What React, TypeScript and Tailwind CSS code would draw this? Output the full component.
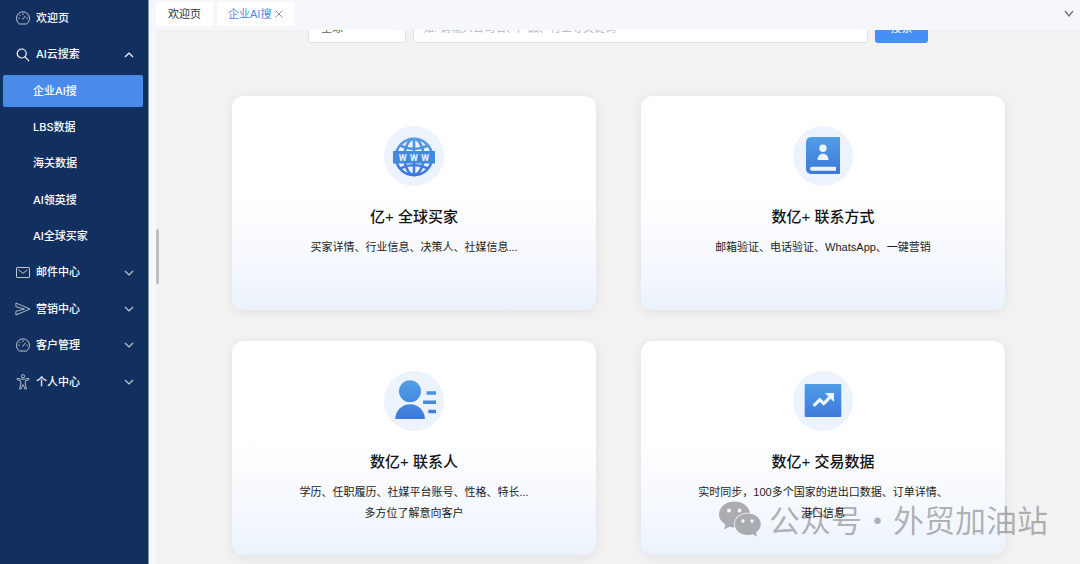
import type { ReactNode } from "react";
import clsx from "clsx";

function DashboardIcon() {
  return (
    <svg viewBox="0 0 14 14" className="h-3.5 w-3.5" fill="none" stroke="currentColor" strokeLinecap="round" strokeLinejoin="round">
      <path d="M3.2 12.8C1.5 11.6.5 9.6.5 7.3a6.5 6.5 0 0 1 13 0c0 2.300-1 4.300-2.700 5.500Z" />
      <path d="M6.600 8.300 9.300 5.100M7 2.600v.9M3.800 4.100l.5.5M2.600 7.200h.8M10.600 7.200h.8" />
    </svg>
  );
}

function SearchIcon() {
  return (
    <svg viewBox="0 0 14 14" className="h-3.5 w-3.5" fill="none" stroke="currentColor" strokeWidth="1.200" strokeLinecap="round">
      <circle cx="5.700" cy="5.500" r="4.500" />
      <path d="m9 8.800 3.700 3.900" />
    </svg>
  );
}

function MailIcon() {
  return (
    <svg viewBox="0 0 14 14" className="h-3.5 w-3.5" fill="none" stroke="currentColor" strokeLinejoin="round">
      <rect x=".5" y="1.500" width="13" height="10" rx=".6" />
      <path d="m2.500 3.800 4.500 3.500 4.500-3.500" />
    </svg>
  );
}

function SendIcon() {
  return (
    <svg viewBox="0 0 14 14" className="h-3.5 w-3.5 overflow-visible" fill="none" stroke="currentColor" strokeWidth=".9" strokeLinejoin="round">
      <path d="M-.1 1 14 7-.1 13V9.300L8.500 7-.1 4.700Z" />
    </svg>
  );
}

function PersonIcon() {
  return (
    <svg viewBox="0 0 14 14" className="h-3.5 w-3.5 overflow-visible" fill="none" stroke="currentColor" strokeWidth=".9" strokeLinejoin="round">
      <circle cx="7" cy="1.200" r="1.600" />
      <path d="M1.200 3.300 5.500 4.200h3l4.300-.9v1.300L9.300 6v3l1.100 5H9L7.300 9.800h-.6L5 14H3.600l1.100-5V6L1.200 4.600Z" />
    </svg>
  );
}

function Chevron({ up = false }: { up?: boolean }) {
  return (
    <svg viewBox="0 0 10 6" className="h-1.5 w-2.5" fill="none" stroke="currentColor" strokeWidth="1.200">
      <path d={up ? "M1 5l4-4 4 4" : "M1 1l4 4 4-4"} />
    </svg>
  );
}

type NavItem = { label: string; icon?: ReactNode; state?: "open" | "closed"; active?: boolean };

const NAV: NavItem[] = [
  { label: "欢迎页", icon: <DashboardIcon /> },
  { label: "AI云搜索", icon: <SearchIcon />, state: "open" },
  { label: "企业AI搜", active: true },
  { label: "LBS数据" },
  { label: "海关数据" },
  { label: "AI领英搜" },
  { label: "AI全球买家" },
  { label: "邮件中心", icon: <MailIcon />, state: "closed" },
  { label: "营销中心", icon: <SendIcon />, state: "closed" },
  { label: "客户管理", icon: <DashboardIcon />, state: "closed" },
  { label: "个人中心", icon: <PersonIcon />, state: "closed" },
];

function Sidebar() {
  return (
    <aside className="w-[149px] shrink-0 border-r border-[#8896b3] bg-[#113060] font-['Inter','Noto_Sans_CJK_SC',sans-serif]">
      <nav className="grid h-[400px] auto-rows-fr px-[3px] pr-[5px]">
        {NAV.map((item) => (
          <button
            key={item.label}
            className={clsx(
              "my-0.5 flex items-center rounded-xs text-left font-medium text-white",
              item.icon ? "pr-[9px] pl-[13px]" : "pl-[30px]",
              item.active && "bg-[#4a8aea]"
            )}
          >
            {item.icon && (
              <span className={clsx("mr-1.5", item.state === "open" ? "text-white" : "text-[#c3c7cf]")}>{item.icon}</span>
            )}
            <span className="flex-1">{item.label}</span>
            {item.state && (
              <span className={item.state === "open" ? "text-white" : "text-[#c3c7cf]"}>
                <Chevron up={item.state === "open"} />
              </span>
            )}
          </button>
        ))}
      </nav>
    </aside>
  );
}

function TabBar() {
  return (
    <header className="z-10 flex h-[30px] shrink-0 items-start gap-1 bg-[#f5f7fa] pt-0.5 pr-1.5 pl-[7px]">
      <button className="h-6 rounded-xs bg-white px-3 text-[#303133]">欢迎页</button>
      <div className="flex h-6 items-center gap-1 rounded-xs bg-white px-[11px] text-[#4a8aea]">
        <button>企业AI搜</button>
        <button aria-label="关闭" className="text-[#8b8f99]">
          <svg viewBox="0 0 8 8" className="h-2 w-2" fill="none" stroke="currentColor">
            <path d="m.5.500 7 7M7.500.500l-7 7" />
          </svg>
        </button>
      </div>
      <button aria-label="更多" className="mt-2 ml-auto text-[#6c7080]">
        <svg viewBox="0 0 10 8" className="h-2 w-2.5" fill="none" stroke="currentColor" strokeWidth="1.300">
          <path d="m1 1 4 5 4-5" />
        </svg>
      </button>
    </header>
  );
}

function SearchBar() {
  return (
    <form className="mx-auto -mt-[17px] flex h-[30px] w-full max-w-[620px] gap-[7px]">
      <div className="relative w-[98px]">
        <select aria-label="地区" className="h-full w-full appearance-none rounded-[3px] border border-[#dfe1e5] bg-white px-3 text-[#606266]">
          <option>全球</option>
        </select>
        <span className="pointer-events-none absolute top-3 right-2 text-[#c0c4cc]">
          <Chevron />
        </span>
      </div>
      <input
        aria-label="关键词"
        placeholder="如: 请输入公司名、产品、行业等关键词"
        className="min-w-0 flex-1 rounded-[3px] border border-[#dfe1e5] bg-white px-[9px] placeholder:text-[#b4b8c0]"
      />
      <button type="button" className="w-[53px] rounded-[3px] bg-[#458ff8] text-white">
        搜索
      </button>
    </form>
  );
}

function GlobeArt() {
  return (
    <>
      <g fill="none" stroke="url(#blue)" strokeWidth="2.600">
        <circle cx="30" cy="31" r="18.200" />
        <ellipse cx="30" cy="31" rx="9.500" ry="18" />
        <path d="M30.010 12v38M16 19.500q14 7 28 0M16 42.500q14-7 28 0" />
      </g>
      <rect x="9" y="25" width="42" height="12.500" fill="#4389e1" />
      <text x="18.700 30 41.300" y="34.500" textAnchor="middle" fill="#edf4fc" className="font-['Roboto',sans-serif] text-[9px] font-bold">
        WWW
      </text>
    </>
  );
}

function BookArt() {
  return (
    <>
      <path d="M18 11h28a1 1 0 0 1 1 1v35a1 1 0 0 1-1 1H18a5 5 0 0 1-5-5V16a5 5 0 0 1 5-5Z" fill="url(#blue)" />
      <g fill="#edf4fc">
        <circle cx="30" cy="22.300" r="3.700" />
        <path d="M24.500 34c0-3.700 2.300-6.300 5.500-6.300s5.500 2.600 5.500 6.300Z" />
        <path d="M19 40.700h24v4H19a2 2 0 0 1 0-4Z" />
      </g>
    </>
  );
}

function ContactArt() {
  return (
    <g fill="url(#blue)">
      <path d="M26 9.300a11 11 0 1 1 0 22 11 11 0 0 1 0-22ZM11.300 48c0-8.500 6.700-14.800 14.800-14.800S41 39.500 41 48ZM42.500 20.300H52v3.500h-9.500ZM39 29.500h13V33H39ZM44.300 38.800H52v3.500h-7.700Z" />
    </g>
  );
}

function TradeArt() {
  return (
    <>
      <rect x="11.700" y="13" width="36.600" height="33" rx="1" fill="url(#blue)" />
      <path d="m20.500 34.800 6.300-6 4 3.800 7-7.300" fill="none" stroke="#edf4fc" strokeWidth="3.200" />
      <path d="M32 22h9v9Z" fill="#edf4fc" />
    </>
  );
}

const CARDS = [
  { title: "亿+ 全球买家", lines: ["买家详情、行业信息、决策人、社媒信息..."], art: <GlobeArt /> },
  { title: "数亿+ 联系方式", lines: ["邮箱验证、电话验证、WhatsApp、一键营销"], art: <BookArt /> },
  { title: "数亿+ 联系人", lines: ["学历、任职履历、社媒平台账号、性格、特长...", "多方位了解意向客户"], art: <ContactArt /> },
  { title: "数亿+ 交易数据", lines: ["实时同步，100多个国家的进出口数据、订单详情、", "港口信息"], art: <TradeArt /> },
];

function FeatureCard({ title, lines, art }: (typeof CARDS)[number]) {
  return (
    <section className="flex min-h-[214px] flex-col items-center rounded-xl bg-linear-to-b from-white from-45% via-[#f3f7fe] via-85% to-[#ebf2fb] pt-[30px] text-center shadow-[0_2px_12px_rgba(0,0,0,0.08)]">
      <svg viewBox="0 0 60 60" className="h-[60px] w-[60px] rounded-full bg-[#ecf3fc]">
        <defs>
          <linearGradient id="blue" gradientUnits="userSpaceOnUse" x1="0" y1="10" x2="0" y2="50">
            <stop offset="0" stopColor="#529fe6" />
            <stop offset="1" stopColor="#3b76da" />
          </linearGradient>
        </defs>
        {art}
      </svg>
      <h2 className="mt-5 text-[15px] leading-[22px] font-medium text-[#111]">{title}</h2>
      <div className="mt-[9px] leading-[21px] text-[#1c1c1c]">
        {lines.map((line) => (
          <p key={line}>{line}</p>
        ))}
      </div>
    </section>
  );
}

function Watermark() {
  return (
    <div className="pointer-events-none absolute right-8 bottom-6 flex items-center gap-2 text-black/30">
      <svg viewBox="0 0 42 36" className="h-9 w-[42px]" fill="currentColor">
        <mask id="back">
          <rect width="42" height="36" fill="white" />
          <ellipse cx="28.800" cy="23.300" rx="13.800" ry="11.600" fill="black" />
          <circle cx="10" cy="9.500" r="2" fill="black" />
          <circle cx="20.500" cy="9.500" r="2" fill="black" />
        </mask>
        <mask id="front">
          <rect width="42" height="36" fill="white" />
          <circle cx="24" cy="20" r="1.700" fill="black" />
          <circle cx="33" cy="20" r="1.700" fill="black" />
        </mask>
        <path mask="url(#back)" d="M15.500.5C24 .5 31 6.200 31 13.500S24 26.500 15.500 26.500c-1.800 0-3.500-.2-5-.7L5 28.500l1.500-5C2.500 21 0 17.500 0 13.500 0 6.200 7 .5 15.500.5Z" />
        <path mask="url(#front)" d="M28.800 12.500c7.300 0 13 4.800 13 10.800 0 3.300-1.800 6.200-4.800 8.200l1 4-4.300-2.200c-1.500.5-3.200.8-4.900.8-7.200 0-13-4.800-13-10.800s5.800-10.800 13-10.800Z" />
      </svg>
      <span className="font-['Noto_Sans_CJK_SC',sans-serif] text-[31px] leading-[42px] whitespace-nowrap">公众号·外贸加油站</span>
    </div>
  );
}

export default function App() {
  return (
    <div className="relative flex h-screen overflow-hidden bg-[#f5f7fa] font-['Liberation_Sans','Noto_Sans_CJK_SC',sans-serif] text-[11px]">
      <Sidebar />
      <div className="flex min-w-0 flex-1 flex-col">
        <TabBar />
        <main className="relative ml-[7px] min-h-0 flex-1 overflow-hidden bg-[#f2f2f2]">
          <SearchBar />
          <div className="mt-[53px] grid grid-cols-2 gap-x-[45px] gap-y-[31px] pr-[75px] pl-[76px]">
            {CARDS.map((card) => (
              <FeatureCard key={card.title} {...card} />
            ))}
          </div>
          <div className="absolute top-[199px] left-0 h-[55px] w-[3px] rounded-xs bg-[#bfbfbf]" />
        </main>
      </div>
      <Watermark />
    </div>
  );
}
